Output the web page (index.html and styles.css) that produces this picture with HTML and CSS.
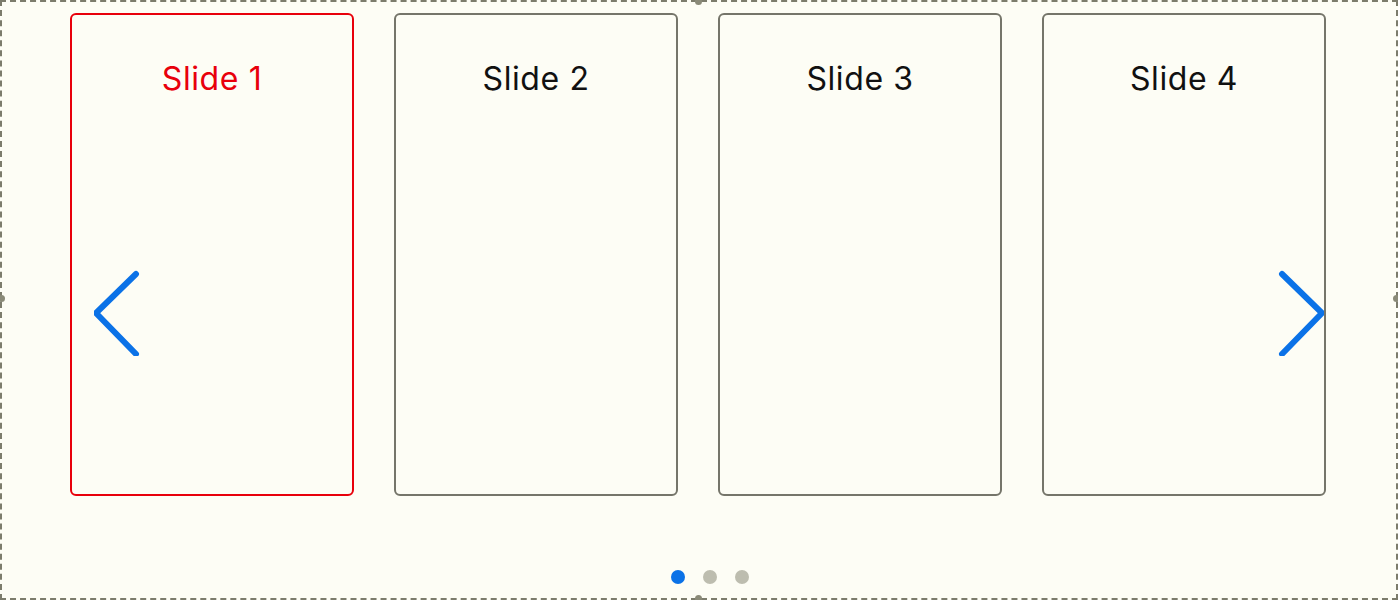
FILE: index.html
```html
<!DOCTYPE html>
<html lang="en">
  <head>
    <meta charset="UTF-8" />
    <meta name="viewport" content="width=device-width, initial-scale=1.0" />
    <title>Slider</title>
    <link rel="stylesheet" href="styles.css">
  </head>
  <body>
    <div class="frame">
      <span class="handle handle-top"></span>
      <span class="handle handle-left"></span>
      <span class="handle handle-right"></span>
      <span class="handle handle-bottom"></span>

      <div class="slider">
        <div class="slides">
          <div class="slide active"><h2>Slide 1</h2></div>
          <div class="slide"><h2>Slide 2</h2></div>
          <div class="slide"><h2>Slide 3</h2></div>
          <div class="slide"><h2>Slide 4</h2></div>
        </div>

        <button class="arrow arrow-prev" aria-label="Previous">
          <svg width="50" height="90" viewBox="0 0 50 90">
            <polyline points="42,8 2,47 42,88" fill="none" stroke="#0b72e7" stroke-width="6" stroke-linecap="round" stroke-linejoin="round" />
          </svg>
        </button>
        <button class="arrow arrow-next" aria-label="Next">
          <svg width="50" height="90" viewBox="0 0 50 90">
            <polyline points="8,8 48,47 8,88" fill="none" stroke="#0b72e7" stroke-width="6" stroke-linecap="round" stroke-linejoin="round" />
          </svg>
        </button>
      </div>

      <div class="dots">
        <span class="dot active"></span>
        <span class="dot"></span>
        <span class="dot"></span>
      </div>
    </div>
  </body>
</html>
```

FILE: styles.css
```css
body {
  margin: 0;
  font-family: "Inter", "Noto Sans", "Liberation Sans", sans-serif;
  background-color: #fdfdf5;
}
.frame {
  position: relative;
  box-sizing: border-box;
  width: 1398px;
  height: 600px;
  border: 2px dashed #7c7c6c;
  display: flex;
  flex-direction: column;
  align-items: center;
}
.handle {
  position: absolute;
  width: 7px;
  height: 7px;
  border-radius: 50%;
  background-color: #8a8a78;
}
.handle-top {
  top: -4px;
  left: 693px;
}
.handle-bottom {
  bottom: -4px;
  left: 693px;
}
.handle-left {
  left: -4px;
  top: 293px;
}
.handle-right {
  right: -4px;
  top: 293px;
}
.slider {
  position: relative;
  margin-top: 11px;
  margin-left: -2px;
}
.slides {
  display: flex;
  gap: 40px;
}
.slide {
  box-sizing: border-box;
  width: 284px;
  height: 483px;
  border: 2px solid #75756a;
  border-radius: 6px;
  text-align: center;
}
.slide h2 {
  margin: 44px 0 0;
  font-size: 32px;
  font-weight: 400;
  line-height: 40px;
  letter-spacing: 0.6px;
  color: #111;
}
.slide.active {
  border-color: #e8000b;
}
.slide.active h2 {
  color: #e8000b;
}
.arrow {
  position: absolute;
  top: 253px;
  padding: 0;
  border: none;
  background: none;
  line-height: 0;
}
.arrow-prev {
  left: 24px;
}
.arrow-next {
  right: 2px;
}
.dots {
  display: flex;
  gap: 18px;
  margin-top: 74px;
  margin-left: 22px;
}
.dot {
  width: 14px;
  height: 14px;
  border-radius: 50%;
  background-color: #bdbdaf;
}
.dot.active {
  background-color: #0b72e7;
}
```
